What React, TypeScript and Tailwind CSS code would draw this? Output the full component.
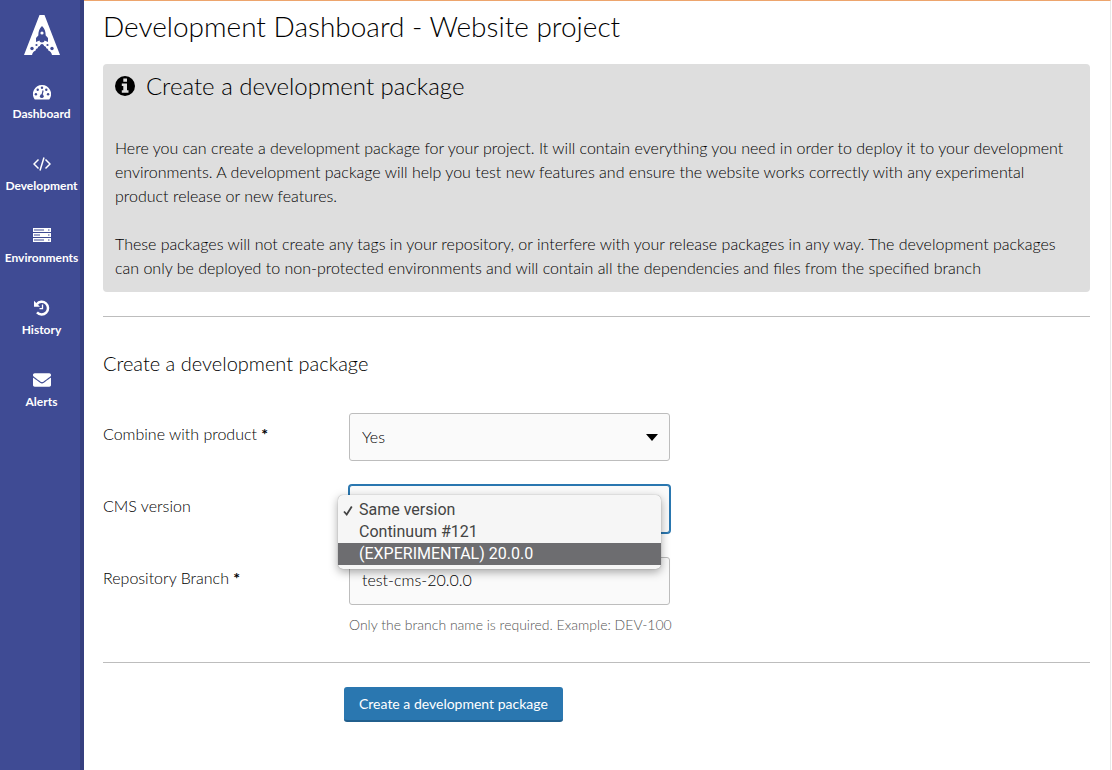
import { useState } from "react";
import type { ReactNode } from "react";
import { FaEnvelope } from "react-icons/fa";

interface NavItemProps {
  href: string;
  label: string;
  children: ReactNode;
}

const NavItem = ({ href, label, children }: NavItemProps) => {
  return (
    <a href={href} className="flex h-[72px] flex-col items-center gap-1 text-white">
      <span className="flex h-5 items-center">{children}</span>
      <span className="text-[12px] leading-4 font-bold">{label}</span>
    </a>
  );
};

const Logo = () => {
  return (
    <svg width="36" height="40" viewBox="0 0 36 40" aria-hidden="true">
      <path d="M15.500 0h5L36 40H26L18 29l-8 11H0z" fill="#fff" />
      <path d="M12 28h12l5 12h-5.500L18 29.500 12.500 40H7z" fill="#fff" />
      <path
        d="M18 11c2.700 2.500 3.700 5.500 3.700 9.500l2.300 2.500v4l-3.500-1.500c0 1-1 2-2.500 2s-2.500-1-2.500-2L12 27v-4l2.300-2.500c0-4 1-7 3.700-9.500z"
        fill="#3f4b94"
      />
      <circle cx="18" cy="18" r="1.600" fill="#fff" />
      <g fill="#3f4b94">
        <path d="M18 29c1.300 0 2 1 2 2 1.500 0 2.200 1 2.200 2.200 1.500.2 2.300 1.300 2.300 2.500 2 .3 3 2 3.500 4.300H8c.5-2.300 1.500-4 3.500-4.300 0-1.200.8-2.300 2.300-2.500 0-1.200.7-2.200 2.200-2.200 0-1 .7-2 2-2z" />
        <circle cx="8" cy="33.500" r="1.700" />
        <circle cx="12.500" cy="30" r="1.100" />
        <circle cx="28" cy="33.500" r="1.700" />
        <circle cx="23.500" cy="30" r="1.100" />
      </g>
    </svg>
  );
};

const GaugeIcon = () => {
  return (
    <svg width="18" height="15" viewBox="0 0 18 15" aria-hidden="true">
      <path d="M9 0a9 9 0 0 1 7.600 13.900q-.3.600-1 .600H2.400q-.7 0-1-.600A9 9 0 0 1 9 0z" fill="#fff" />
      <g fill="#3f4b94">
        <circle cx="2.900" cy="9.200" r="1.200" />
        <circle cx="4.700" cy="4.700" r="1.200" />
        <circle cx="9" cy="2.800" r="1.200" />
        <circle cx="13.300" cy="4.700" r="1.200" />
        <circle cx="15.100" cy="9.200" r="1.200" />
        <circle cx="8.800" cy="11.200" r="1.900" />
      </g>
      <path d="M8.900 10.500l1.200-5" stroke="#3f4b94" strokeWidth="1.200" />
    </svg>
  );
};

const CodeIcon = () => {
  return (
    <svg width="18" height="14" viewBox="0 0 18 14" fill="none" stroke="#fff" strokeWidth="1.500" aria-hidden="true">
      <path d="M5.500 2.500L1 7l4.500 4.500M12.500 2.500L17 7l-4.500 4.500M11 .5L7 13.500" />
    </svg>
  );
};

const ServersIcon = () => {
  return (
    <svg width="18" height="16" viewBox="0 0 18 16" aria-hidden="true">
      <path d="M0 0h18v4H0zM0 5h18v4H0zM0 10h18v4H0z" fill="#fff" />
      <path d="M1 2h10M1 7h6M1 12h10M15 2h1.500M15 7h1.500M15 12h1.500" stroke="#3f4b94" strokeWidth="1" />
    </svg>
  );
};

const HistoryIcon = () => {
  return (
    <svg width="16" height="16" viewBox="0 0 16 16" fill="none" aria-hidden="true">
      <path d="M2.800 4.200A6.300 6.300 0 1 1 3 12.300" stroke="#fff" strokeWidth="2.500" />
      <path d="M0 .8l6 6H0z" fill="#fff" />
      <path d="M8.500 4.500v4.200H5.500" stroke="#fff" strokeWidth="1.300" />
    </svg>
  );
};

const InfoIcon = () => {
  return (
    <svg width="20" height="20" viewBox="0 0 20 20" aria-hidden="true">
      <circle cx="10" cy="10" r="10" />
      <path d="M8.300 2.500h3.700v3.300H8.300zM6.800 7.500H12v6.800h1.500v2.500H6.800v-2.500h1.500V10H6.800z" fill="#dedede" />
    </svg>
  );
};

const CheckIcon = () => {
  return (
    <svg width="10" height="11" viewBox="0 0 10 11" fill="none" aria-hidden="true">
      <path d="M1 6.500l2.700 3L8.800 1.500" stroke="#444" strokeWidth="1.800" />
    </svg>
  );
};

const versions = ["Same version", "Continuum #121", "(EXPERIMENTAL) 20.0.0"];

const App = () => {
  const [version, setVersion] = useState(versions[0]);
  const [branch, setBranch] = useState("test-cms-20.0.0");

  return (
    <div className="flex min-h-screen bg-white font-['Lato',sans-serif] text-[16px] leading-6 font-light text-black">
      <nav className="w-[84px] shrink-0 border-r-4 border-[#36407f] bg-[#3f4b94]">
        <a href="#home" aria-label="Home" className="flex h-[82px] justify-center pt-[15px] pl-1">
          <Logo />
        </a>
        <div className="-mr-[3px]">
          <NavItem href="#dashboard" label="Dashboard">
            <GaugeIcon />
          </NavItem>
          <NavItem href="#development" label="Development">
            <CodeIcon />
          </NavItem>
          <NavItem href="#environments" label="Environments">
            <ServersIcon />
          </NavItem>
          <NavItem href="#history" label="History">
            <HistoryIcon />
          </NavItem>
          <NavItem href="#alerts" label="Alerts">
            <FaEnvelope size={18} />
          </NavItem>
        </div>
      </nav>

      <main className="mr-px min-w-0 flex-1 border-t border-r border-t-[#eda56d] border-r-[#e8e8e8] pr-5 pl-[19px]">
        <h1 className="pt-[7px] text-[28px] leading-9">Development Dashboard - Website project</h1>

        <section className="mt-5 rounded bg-[#dedede] px-3 pt-2 pb-3">
          <h2 className="flex items-center gap-[11px] text-[24px] leading-7">
            <InfoIcon />
            Create a development package
          </h2>
          <p className="mt-9">
            Here you can create a development package for your project. It will contain everything you need in order to
            deploy it to your development environments. A development package will help you test new features and
            ensure the website works correctly with any experimental product release or new features.
          </p>
          <p className="mt-6">
            These packages will not create any tags in your repository, or interfere with your release packages in any
            way. The development packages can only be deployed to non-protected environments and will contain all the
            dependencies and files from the specified branch
          </p>
        </section>

        <hr className="mt-6 border-[#bdbdbd]" />

        <form onSubmit={(e) => e.preventDefault()}>
          <h3 className="mt-8 text-[20px] leading-7">Create a development package</h3>

          <div className="mt-9 grid grid-cols-[246px_321px] gap-y-6">
            <label htmlFor="combine" className="pt-[9px]">
              Combine with product <span className="font-bold">*</span>
            </label>
            <div className="relative">
              <select
                id="combine"
                className="h-12 w-full appearance-none rounded-[3px] border border-[#bdbdbd] bg-[#fafafa] px-3"
              >
                <option>Yes</option>
                <option>No</option>
              </select>
              <svg
                width="12"
                height="7"
                viewBox="0 0 12 7"
                className="pointer-events-none absolute top-[21px] right-3"
                aria-hidden="true"
              >
                <path d="M0 0h12L6 7z" />
              </svg>
            </div>

            <label htmlFor="version" className="pt-[9px]">
              CMS version
            </label>
            <div className="relative">
              <select
                id="version"
                value={version}
                onChange={(e) => setVersion(e.target.value)}
                className="h-12 w-full appearance-none rounded-[3px] border border-[#2a77b0] bg-[#fafafa] px-3 text-transparent ring-1 ring-[#2a77b0]"
              >
                {versions.map((item) => (
                  <option key={item}>{item}</option>
                ))}
              </select>
              <ul
                role="listbox"
                aria-label="CMS version"
                className="absolute top-[10px] -left-[11px] z-10 w-[323px] rounded-[5px] bg-[#f6f6f6] py-1 font-['Roboto',sans-serif] text-[16px] leading-[22px] font-normal text-[#444] shadow-[0_3px_10px_rgba(0,0,0,0.35),0_0_1px_rgba(0,0,0,0.4)]"
              >
                {versions.map((item, index) => (
                  <li
                    key={item}
                    role="option"
                    aria-selected={item === version}
                    onClick={() => setVersion(item)}
                    className={index === 2 ? "flex items-center bg-[#6d6d70] text-white" : "flex items-center"}
                  >
                    <span className="w-[21px] pl-[5px]">{item === version && <CheckIcon />}</span>
                    {item}
                  </li>
                ))}
              </ul>
            </div>

            <label htmlFor="branch" className="pt-[9px]">
              Repository Branch <span className="font-bold">*</span>
            </label>
            <div>
              <input
                id="branch"
                value={branch}
                onChange={(e) => setBranch(e.target.value)}
                className="h-12 w-full rounded-[3px] border border-[#bdbdbd] bg-[#fafafa] px-3 pb-1"
              />
              <p className="mt-2 text-[14px] whitespace-nowrap text-[#555]">
                Only the branch name is required. Example: DEV-100
              </p>
            </div>
          </div>

          <hr className="mt-[25px] border-[#bdbdbd]" />

          <button
            type="submit"
            className="mt-6 ml-[241px] h-[35px] rounded-[3px] border-b-2 border-[#215f8d] bg-[#2a77b0] px-[15px] text-[14px] font-normal text-white"
          >
            Create a development package
          </button>
        </form>
      </main>
    </div>
  );
};

export default App;
